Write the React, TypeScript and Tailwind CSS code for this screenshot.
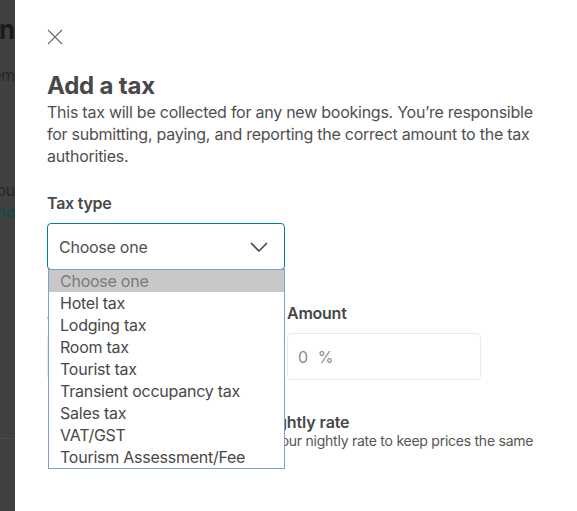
import React from "react";

const options = [
  "Choose one",
  "Hotel tax",
  "Lodging tax",
  "Room tax",
  "Tourist tax",
  "Transient occupancy tax",
  "Sales tax",
  "VAT/GST",
  "Tourism Assessment/Fee",
];

export default function App() {
  return (
    <div
      className="flex w-[577px] h-[511px] overflow-hidden bg-white tracking-[-0.25px]"
      style={{ fontFamily: "Inter, 'Noto Sans', sans-serif" }}
    >
      {/* dimmed background page */}
      <div className="w-[15px] shrink-0 h-full bg-[#404040] overflow-hidden flex flex-col items-end">
        <div className="mt-[14px] whitespace-nowrap text-[26px] font-bold leading-[32px] text-[#1b1b1b]">
          Description
        </div>
        <div className="mt-[18px] whitespace-nowrap text-[16px] leading-[22px] text-[#262626]">
          Add them
        </div>
        <div className="mt-[93px] whitespace-nowrap text-[16px] leading-[22px] text-[#262626]">
          If you
        </div>
        <div className="whitespace-nowrap text-[16px] leading-[22px] text-[#0b4a4b]">
          Learn mo
        </div>
        <div className="mt-[215px] w-[15px] h-px bg-[#4a4a4a]" />
      </div>

      {/* panel */}
      <div className="flex-1 h-full bg-white pl-[32px] pt-[29px] text-[#484848]">
        <svg width="16" height="16" viewBox="0 0 16 16" className="block">
          <path d="M1 1 L15 15 M15 1 L1 15" stroke="#6a6a6a" strokeWidth="1.1" fill="none" />
        </svg>

        <h1 className="mt-[26px] text-[24px] font-bold leading-[30px] tracking-[-0.2px] text-[#484848]">
          Add a tax
        </h1>
        <p className="w-[505px] text-[16px] leading-[22px] text-[#4f4f4f]">
          This tax will be collected for any new bookings. You’re responsible for submitting, paying, and reporting the correct amount to the tax authorities.
        </p>

        <div className="mt-[25px] text-[16px] font-semibold leading-[22px]">Tax type</div>
        <div className="relative mt-[9px] w-[238px]">
          <div className="h-[47px] rounded-[4px] border border-[#008489] flex items-center justify-between pl-[11px] pr-[16px]">
            <span className="text-[16px] text-[#4f4f4f]">Choose one</span>
            <svg width="18" height="10" viewBox="0 0 18 10">
              <path d="M1 1 L9 9 L17 1" stroke="#484848" strokeWidth="1.6" fill="none" />
            </svg>
          </div>
          <div className="absolute left-[1px] top-[46px] w-[237px] z-10 bg-white border border-[#7f9ed6]">
            {options.map((o, i) => (
              <div
                key={o}
                className={
                  i === 0
                    ? "h-[22px] pl-[11px] text-[16px] leading-[22px] bg-[#c8c8c8] text-[#7a7a7a]"
                    : "h-[22px] pl-[11px] text-[16px] leading-[22px] text-[#484848]"
                }
              >
                {o}
              </div>
            ))}
          </div>
        </div>

        <div className="mt-[32px] flex gap-[16px]">
          <div className="w-[224px]">
            <div className="text-[16px] font-semibold leading-[22px]">Amount type</div>
            <div className="mt-[9px] h-[47px] rounded-[4px] border border-[#ebebeb]" />
          </div>
          <div className="w-[194px]">
            <div className="text-[16px] font-semibold leading-[22px]">Amount</div>
            <div className="mt-[9px] h-[47px] rounded-[4px] border border-[#ebebeb] flex items-center pl-[10px] text-[16px] text-[#8a8a8a]">
              <span>0</span>
              <span className="ml-[10px]">%</span>
            </div>
          </div>
        </div>

        <div className="mt-[32px] flex gap-[18px]">
          <div className="ml-[4px] w-[20px] h-[20px] rounded-[3px] border border-[#b0b0b0] mt-[1px]" />
          <div>
            <div className="text-[16px] font-semibold leading-[20px] tracking-[-0.1px]">Tax is included in your nightly rate</div>
            <div className="text-[14px] leading-[18px] text-[#555]">Select this if tax is already in your nightly rate to keep prices the same</div>
          </div>
        </div>
      </div>
    </div>
  );
}
